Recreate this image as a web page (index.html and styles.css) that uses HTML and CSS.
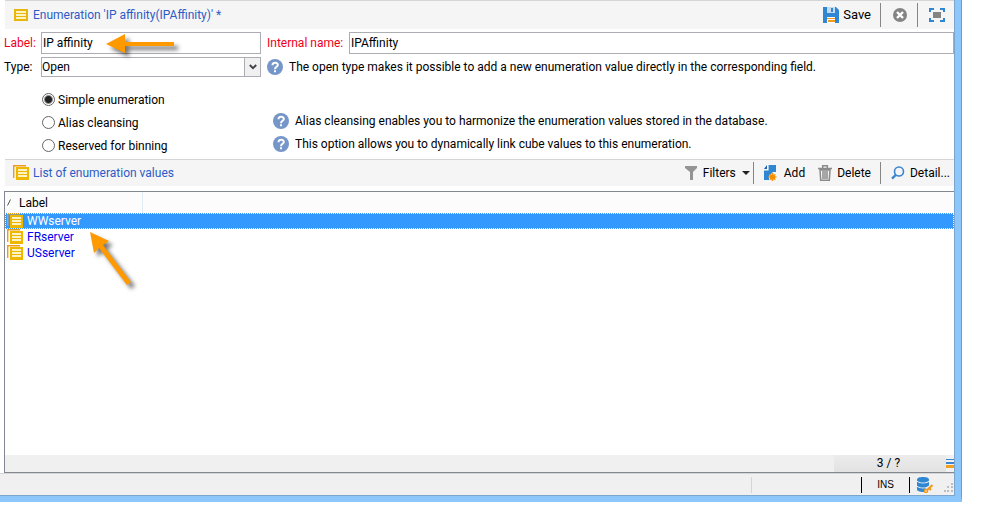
FILE: index.html
```html
<!DOCTYPE html>
<html lang="en">
<head>
<meta charset="utf-8">
<title>Enumeration</title>
<link rel="stylesheet" href="styles.css">
</head>
<body>
<svg class="defs" aria-hidden="true">
  <symbol id="list" viewBox="0 0 14 12"><path fill="#e9b60c" d="M0 0h14v12H0z"/><path fill="#fff3c4" d="M2 2h10v2H2zM2 5h10v2H2zM2 8h10v2H2z"/></symbol>
  <symbol id="lists" viewBox="0 0 16 16"><path fill="none" stroke="#f09a1a" stroke-width="1.4" d="M.7 13V.7H13"/><path fill="#efb800" d="M3 2h13v13H3z"/><path fill="#fff3c4" d="M5 4h9v2H5zM5 7h9v2H5zM5 10h9v2H5z"/></symbol>
  <symbol id="help" viewBox="0 0 16 16"><circle cx="8" cy="8" r="8" fill="#7596c8"/><path fill="none" stroke="#fff" stroke-width="2" d="M5.500 6.200C5.500 3 10.800 3 10.800 6 10.800 7.800 8 7.800 8 10.200"/><path fill="#fff" d="M7 11.300h2v2H7z"/></symbol>
</svg>
<main class="window">
  <header class="bar">
    <svg class="icon-list"><use href="#list"/></svg>
    <h1 class="bar-title">Enumeration 'IP affinity(IPAffinity)' *</h1>
    <div class="tools">
      <button class="tool save" type="button">
        <svg class="icon16" viewBox="0 0 16 16"><path fill="#2f86d2" d="M0 0h4v6h8V0h1l3 3v13H0z"/><path fill="#c5dcf0" d="M4 0h8v6H4z"/><path fill="#2f86d2" d="M8 1h2v4H8z"/><path fill="#fff" d="M4 10h8v6H4z"/><path fill="#f29a1c" d="M4 11h8v1H4zM5 13h7v2H5z"/></svg>Save</button>
      <span class="sep"></span>
      <button class="tool only-icon" type="button" aria-label="Cancel">
        <svg class="icon14" viewBox="0 0 14 14"><circle cx="7" cy="7" r="7" fill="#848484"/><path stroke="#fff" stroke-width="2.4" d="M4 4l6 6M10 4l-6 6"/></svg></button>
      <span class="sep"></span>
      <button class="tool full" type="button" aria-label="Full screen">
        <svg class="icon16" viewBox="0 0 16 14"><path fill="none" stroke="#2f86d2" stroke-width="2" d="M1 4V1h4M11 1h4v3M15 10v3h-4M5 13H1v-3"/><path fill="#858585" d="M4 4h8v6H4z"/></svg></button>
    </div>
  </header>

  <form class="form">
    <div class="row">
      <label class="name required" for="label">Label:</label>
      <input class="box short" id="label" type="text" value="IP affinity">
      <label class="inner-name required" for="internal">Internal name:</label>
      <input class="box long" id="internal" type="text" value="IPAffinity">
    </div>
    <div class="row type-row">
      <label class="name" for="type">Type:</label>
      <div class="combo short">
        <select class="box" id="type"><option>Open</option></select>
        <span class="combo-button"><svg class="chevron" viewBox="0 0 8 6"><path fill="none" stroke="#444" stroke-width="2" d="M.8 1L4 4.200 7.200 1"/></svg></span>
      </div>
      <p class="hint"><svg class="icon16"><use href="#help"/></svg>The open type makes it possible to add a new enumeration value directly in the corresponding field.</p>
    </div>
    <div class="choices">
      <div class="choice"><label class="option"><input type="radio" name="kind" checked>Simple enumeration</label></div>
      <div class="choice"><label class="option"><input type="radio" name="kind">Alias cleansing</label>
        <p class="hint"><svg class="icon16"><use href="#help"/></svg>Alias cleansing enables you to harmonize the enumeration values stored in the database.</p></div>
      <div class="choice"><label class="option"><input type="radio" name="kind">Reserved for binning</label>
        <p class="hint"><svg class="icon16"><use href="#help"/></svg>This option allows you to dynamically link cube values to this enumeration.</p></div>
    </div>
  </form>

  <div class="bar values-bar">
    <svg class="icon16"><use href="#lists"/></svg>
    <h2 class="bar-title">List of enumeration values</h2>
    <div class="tools">
      <button class="tool filters" type="button">
        <svg class="icon14" viewBox="0 0 14 14"><path fill="#949494" d="M1 0h12v2L9 6v8H6V6L1 2z"/></svg>Filters<svg class="caret" viewBox="0 0 8 4"><path fill="#222" d="M0 0h8L4 4z"/></svg></button>
      <span class="sep"></span>
      <button class="tool add" type="button">
        <svg class="icon14" viewBox="0 0 14 16"><path fill="#2f86d2" d="M5 0h8v7h-3l-4 4v4H1V5h4z"/><path fill="#1c5f9f" d="M1 4l3-4v4z"/><path stroke="#f5f5f5" stroke-width="1.200" fill="none" d="M5 0v5H1"/><path stroke="#f29a1c" stroke-width="1.600" d="M9.500 8v8M5.500 12h8M6.700 9.200l5.600 5.600M12.300 9.200l-5.600 5.600"/><circle cx="9.500" cy="12" r="2.600" fill="#f09000"/></svg>Add</button>
      <button class="tool delete" type="button">
        <svg class="icon14" viewBox="0 0 14 16"><path fill="none" stroke="#8b8b8b" stroke-width="1.500" d="M0 3.500h14M4.700 3V.8h4.600V3M2 5l.7 10.200h8.600L12 5zM5 6v8M7 6v8M9 6v8"/></svg>Delete</button>
      <span class="sep"></span>
      <button class="tool detail" type="button">
        <svg class="icon14" viewBox="0 0 14 14"><circle cx="8" cy="5.500" r="4.500" fill="none" stroke="#3a86d0" stroke-width="1.600"/><path stroke="#3a86d0" stroke-width="2.400" d="M4.700 9L1 12.600"/></svg>Detail...</button>
    </div>
  </div>

  <section class="list">
    <table class="values">
      <thead><tr><th class="label-col"><svg class="sort" viewBox="0 0 4 7"><path stroke="#555" d="M.5 6.500l3-6"/></svg>Label</th><th></th></tr></thead>
      <tbody>
        <tr class="selected"><td colspan="2"><svg class="icon-row"><use href="#lists"/></svg>WWserver</td></tr>
        <tr><td colspan="2"><svg class="icon-row"><use href="#lists"/></svg>FRserver</td></tr>
        <tr><td colspan="2"><svg class="icon-row"><use href="#lists"/></svg>USserver</td></tr>
      </tbody>
    </table>
    <div class="list-foot">
      <div class="count">3 / ?</div>
      <svg class="stripes" viewBox="0 0 8 9"><path fill="#3a86d0" d="M0 0h8v1H0zM0 3h8v2H0z"/><path fill="#f0a020" d="M0 6h8v3H0z"/></svg>
    </div>
  </section>

  <footer class="status">
    <span class="cell"></span>
    <span class="ins">INS</span>
    <svg class="db" viewBox="0 0 16 16"><path fill="#2f86d2" d="M0 2.500C0-.8 12-.8 12 2.500v10C12 15.800 0 15.800 0 12.500z"/><path fill="none" stroke="#f0f0f0" stroke-width="1.100" d="M0 4c2 2.600 10 2.600 12 0M0 9c2 2.600 10 2.600 12 0"/><path stroke="#f0f0f0" stroke-width="4" d="M15.500 8L9 14"/><path stroke="#f09a1c" stroke-width="2" d="M15.500 8L9 14M12 11l2 2"/><circle cx="9" cy="14" r="1.500" fill="#fff" stroke="#f09a1c" stroke-width="1.500"/></svg>
    <svg class="grip" viewBox="0 0 9 9"><path fill="#bdbdbd" d="M7 0h2v2H7zM3 3h2v2H3zM7 3h2v2H7zM0 7h2v2H0zM3 7h2v2H3zM7 7h2v2H7z"/></svg>
  </footer>

  <svg class="arrow arrow-field" viewBox="0 0 80 30"><path fill="#ff9900" d="M1 11L20 1v8h49v4H20v7z"/></svg>
  <svg class="arrow arrow-row" viewBox="0 0 56 66"><path fill="#ff9900" d="M2 2l19 9-6 4 28 37-4 3-28-37-5 5z"/></svg>
</main>
</body>
</html>
```

FILE: styles.css
```css
* { box-sizing: border-box; }

body {
  margin: 0;
  background: #fff;
  color: #000;
  font: 12px/16px Roboto, "Open Sans", sans-serif;
}

h1, h2, p { margin: 0; font: inherit; }

input, select, button { font: inherit; color: inherit; }

svg { flex: none; }

.defs { position: absolute; width: 0; height: 0; }

.window {
  position: relative;
  display: flex;
  flex-direction: column;
  height: calc(100vh - 20px);
  margin-right: 24px;
  border-right: 1px solid #6c9fce;
  border-bottom: 6px solid #8cc6fa;
  box-shadow: inset -6px 0 #8cc6fa, inset -7px 0 #7aa5cf;
  padding-right: 7px;
}

.icon16 { width: 16px; height: 16px; }
.icon14 { width: 14px; height: 16px; }
.icon-list { width: 14px; height: 12px; }

.bar {
  display: flex;
  align-items: center;
  height: 29px;
  margin-left: 5px;
  padding-left: 9px;
  border-top: 1px solid #d5d5d5;
  background: #f5f5f5;
}

.bar-title { margin-left: 5px; color: #2c5cc5; }

.tools { display: flex; align-items: center; margin-left: auto; }

.tool {
  display: flex;
  align-items: center;
  padding: 0;
  border: 0;
  background: none;
}

.sep { width: 1px; height: 24px; background: #868686; }

.save { gap: 4px; margin-right: 9px; font-size: 13px; }
.only-icon { padding: 0 10px 0 12px; }
.full { padding: 0 9px 0 11px; }

.row { display: flex; align-items: center; height: 22px; margin-top: 3px; }
.type-row { height: 20px; margin-top: 3px; }

.name { width: 41px; padding-left: 4px; }
.required { color: #f00018; }
.inner-name { width: 88px; padding-left: 6px; white-space: nowrap; }

.box {
  height: 22px;
  padding: 0 1px;
  border: 1px solid #abadb3;
  border-radius: 0;
  background: #fff;
  outline: 0;
}

.short { width: 220px; }
.long { flex: 1; min-width: 0; }

.combo { position: relative; height: 20px; }
.combo .box { width: 100%; height: 20px; padding: 0; appearance: none; }

.combo-button {
  position: absolute;
  top: 0;
  right: 0;
  display: grid;
  place-items: center;
  width: 17px;
  height: 20px;
  border: 1px solid #abadb3;
  background: #f0f0f0;
  pointer-events: none;
}

.chevron { width: 8px; height: 6px; }

.hint { display: flex; align-items: center; gap: 6px; white-space: nowrap; }
.type-row .hint { margin-left: 6px; }

.choices { margin-top: 11px; padding-left: 42px; }
.choice { display: flex; align-items: center; height: 23px; }
.choice .hint { align-self: flex-start; margin-top: 2px; }

.option { display: flex; align-items: center; gap: 3px; width: 231px; }

.option input {
  appearance: none;
  width: 13px;
  height: 13px;
  margin: 0;
  border: 1px solid #666;
  border-radius: 50%;
  background: #fff;
}

.option input:checked { background: radial-gradient(circle, #222 3px, #fff 5px); }

.values-bar { height: 27px; margin-top: 2px; padding-left: 8px; }
.values-bar .bar-title { margin-left: 4px; }
.values-bar .sep { height: 22px; }

.filters { gap: 5px; padding-right: 3px; }
.caret { width: 8px; height: 4px; margin-left: 1px; }
.add { gap: 7px; padding: 0 13px 0 9px; }
.delete { gap: 5px; padding-right: 9px; }
.detail { gap: 5px; padding: 0 4px 0 10px; }

.list {
  display: flex;
  flex: 1;
  flex-direction: column;
  margin: 5px 0 0 4px;
  border: 1px solid #828790;
  border-right: 0;
}

.values { width: 100%; border-spacing: 0; }
.values th { height: 21px; padding: 0; background: #fcfcfc; font-weight: normal; text-align: left; }
.values .label-col { width: 138px; border-right: 1px solid #e2ecf7; }
.sort { width: 4px; height: 7px; margin: 0 8px 2px 2px; vertical-align: middle; }

.values td { height: 16px; padding: 0; color: #0000f0; line-height: 16px; }
.icon-row { width: 16px; height: 16px; margin: 0 4px 0 2px; vertical-align: top; }

.values .selected td {
  background: #3399ff;
  color: #fff;
  outline: 1px dotted #fff;
  outline-offset: -1px;
}

.list-foot {
  display: flex;
  align-items: center;
  justify-content: flex-end;
  height: 17px;
  margin-top: auto;
  background: #f0f0f0;
}

.count {
  width: 112px;
  height: 17px;
  padding-right: 3px;
  background: linear-gradient(#ececec, #e2e2e2);
  text-align: center;
}

.stripes { width: 8px; height: 9px; }

.status {
  display: flex;
  align-items: center;
  height: 23px;
  border-top: 1px solid #d5d5d5;
  border-bottom: 1px solid #7aa5cf;
  background: #f0f0f0;
}

.cell { width: 110px; height: 16px; margin-left: auto; border-left: 1px solid #d5d5d5; }

.ins {
  width: 49px;
  height: 16px;
  border: solid #000;
  border-width: 0 1px;
  font: 10px/16px "Liberation Sans", sans-serif;
  text-align: center;
}

.db { width: 16px; height: 16px; margin-left: 7px; }
.grip { width: 9px; height: 9px; margin: 6px 1px 0 11px; }

.arrow { position: absolute; filter: drop-shadow(4px 4px 2px #0008); overflow: visible; pointer-events: none; }
.arrow-field { left: 105px; top: 33px; width: 80px; height: 30px; }
.arrow-row { left: 88px; top: 230px; width: 56px; height: 66px; }
```
